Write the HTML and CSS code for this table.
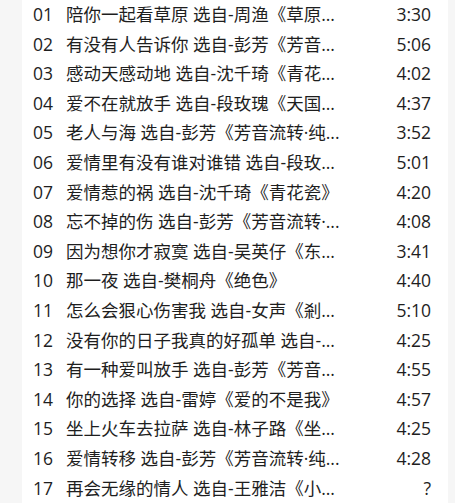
FILE: index.html
```html
<!DOCTYPE html>
<html lang="zh">
<head>
<meta charset="utf-8">
<link rel="stylesheet" href="styles.css">
</head>
<body>
<ul class="list">
  <li class="row"><span class="num">01</span><span class="title">陪你一起看草原 选自-周渔《草原...</span><span class="time">3:30</span></li>
  <li class="row"><span class="num">02</span><span class="title">有没有人告诉你 选自-彭芳《芳音...</span><span class="time">5:06</span></li>
  <li class="row"><span class="num">03</span><span class="title">感动天感动地 选自-沈千琦《青花...</span><span class="time">4:02</span></li>
  <li class="row"><span class="num">04</span><span class="title">爱不在就放手 选自-段玫瑰《天国...</span><span class="time">4:37</span></li>
  <li class="row"><span class="num">05</span><span class="title">老人与海 选自-彭芳《芳音流转·纯...</span><span class="time">3:52</span></li>
  <li class="row"><span class="num">06</span><span class="title">爱情里有没有谁对谁错 选自-段玫...</span><span class="time">5:01</span></li>
  <li class="row"><span class="num">07</span><span class="title">爱情惹的祸 选自-沈千琦《青花瓷》</span><span class="time">4:20</span></li>
  <li class="row"><span class="num">08</span><span class="title">忘不掉的伤 选自-彭芳《芳音流转·...</span><span class="time">4:08</span></li>
  <li class="row"><span class="num">09</span><span class="title">因为想你才寂寞 选自-吴英仔《东...</span><span class="time">3:41</span></li>
  <li class="row"><span class="num">10</span><span class="title">那一夜 选自-樊桐舟《绝色》</span><span class="time">4:40</span></li>
  <li class="row"><span class="num">11</span><span class="title">怎么会狠心伤害我 选自-女声《剎...</span><span class="time">5:10</span></li>
  <li class="row"><span class="num">12</span><span class="title">没有你的日子我真的好孤单 选自-...</span><span class="time">4:25</span></li>
  <li class="row"><span class="num">13</span><span class="title">有一种爱叫放手 选自-彭芳《芳音...</span><span class="time">4:55</span></li>
  <li class="row"><span class="num">14</span><span class="title">你的选择 选自-雷婷《爱的不是我》</span><span class="time">4:57</span></li>
  <li class="row"><span class="num">15</span><span class="title">坐上火车去拉萨 选自-林子路《坐...</span><span class="time">4:25</span></li>
  <li class="row"><span class="num">16</span><span class="title">爱情转移 选自-彭芳《芳音流转·纯...</span><span class="time">4:28</span></li>
  <li class="row"><span class="num">17</span><span class="title">再会无缘的情人 选自-王雅洁《小...</span><span class="time">?</span></li>
</ul>
</body>
</html>
```
FILE: styles.css
```css
html, body {
  margin: 0;
  padding: 0;
}
body {
  background: #f6f6f6;
  font-family: "Open Sans", "Noto Sans CJK SC", sans-serif;
  color: #1e1e1e;
  width: 455px;
  height: 503px;
  overflow: hidden;
}
.list {
  list-style: none;
  margin: 0 0 0 22px;
  padding: 0;
  width: 426px;
  height: 503px;
  background: #fff;
}
.row {
  display: grid;
  grid-template-columns: 33px 290px 1fr;
  align-items: center;
  height: 29.6px;
  padding: 0 17px 0 11px;
  font-size: 17.5px;
  line-height: 1;
}
.num,
.title,
.time {
  white-space: nowrap;
}
.time {
  text-align: right;
}
```
